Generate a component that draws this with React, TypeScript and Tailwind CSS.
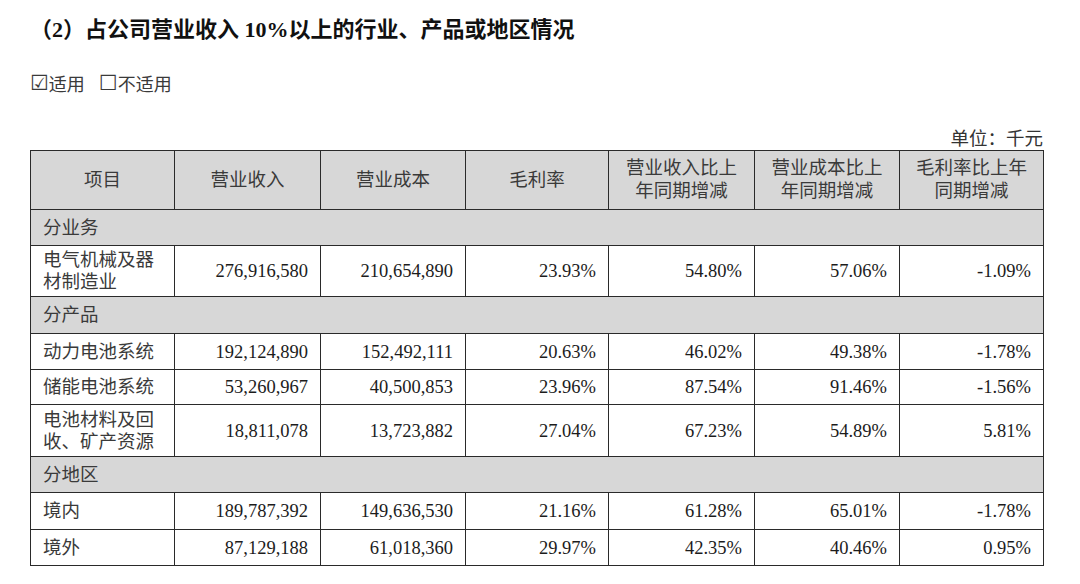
import React from "react";

type Row =
  | { kind: "section"; label: string; h: string }
  | { kind: "data"; label: React.ReactNode; values: string[]; h: string };

const rows: Row[] = [
  { kind: "section", label: "分业务", h: "h-[36px]" },
  {
    kind: "data",
    label: (
      <>
        电气机械及器
        <br />
        材制造业
      </>
    ),
    values: ["276,916,580", "210,654,890", "23.93%", "54.80%", "57.06%", "-1.09%"],
    h: "h-[51px]",
  },
  { kind: "section", label: "分产品", h: "h-[37px]" },
  {
    kind: "data",
    label: "动力电池系统",
    values: ["192,124,890", "152,492,111", "20.63%", "46.02%", "49.38%", "-1.78%"],
    h: "h-[36px]",
  },
  {
    kind: "data",
    label: "储能电池系统",
    values: ["53,260,967", "40,500,853", "23.96%", "87.54%", "91.46%", "-1.56%"],
    h: "h-[35px]",
  },
  {
    kind: "data",
    label: (
      <>
        电池材料及回
        <br />
        收、矿产资源
      </>
    ),
    values: ["18,811,078", "13,723,882", "27.04%", "67.23%", "54.89%", "5.81%"],
    h: "h-[52px]",
  },
  { kind: "section", label: "分地区", h: "h-[36px]" },
  {
    kind: "data",
    label: "境内",
    values: ["189,787,392", "149,636,530", "21.16%", "61.28%", "65.01%", "-1.78%"],
    h: "h-[37px]",
  },
  {
    kind: "data",
    label: "境外",
    values: ["87,129,188", "61,018,360", "29.97%", "42.35%", "40.46%", "0.95%"],
    h: "h-[36px]",
  },
];

const colClasses = [
  "w-[144px]",
  "w-[146px]",
  "w-[145px]",
  "w-[143px]",
  "w-[146px]",
  "w-[145px]",
  "w-[144px]",
];

const headers: React.ReactNode[] = [
  "项目",
  "营业收入",
  "营业成本",
  "毛利率",
  <>
    营业收入比上
    <br />
    年同期增减
  </>,
  <>
    营业成本比上
    <br />
    年同期增减
  </>,
  <>
    毛利率比上年
    <br />
    同期增减
  </>,
];

export default function App() {
  return (
    <div className="w-[1080px] h-[584px] bg-white overflow-hidden pl-[30px] font-['Liberation_Serif','Noto_Sans_CJK_SC',serif]">
      <div className="mt-[15px] h-[30px] leading-[30px] text-[22px] font-bold text-[#111]">
        （2）占公司营业收入 10%以上的行业、产品或地区情况
      </div>
      <div className="mt-[26px] h-[24px] leading-[24px] text-[18px] text-[#3a3a3a] flex items-center font-['Noto_Sans_CJK_SC',sans-serif]">
        <span className="font-['DejaVu_Sans',sans-serif] text-[21px] leading-[24px]">☑</span>
        <span>适用</span>
        <span className="ml-[14px] font-['DejaVu_Sans',sans-serif] text-[21px] leading-[24px]">☐</span>
        <span>不适用</span>
      </div>
      <div className="mt-[33px] w-[1013px] h-[22px] leading-[22px] text-right text-[18.5px] text-[#333]">
        单位：千元
      </div>
      <table className="border-collapse table-fixed w-[1013px] text-[18.5px] text-[#1c1c1c]">
        <colgroup>
          {colClasses.map((c, i) => (
            <col key={i} className={c} />
          ))}
        </colgroup>
        <thead>
          <tr className="h-[59px] bg-[#d7d7d7]">
            {headers.map((h, i) => (
              <th
                key={i}
                className="border border-[#2a2a2a] font-normal text-center leading-[23px] text-[#3a3a3a] px-1"
              >
                {h}
              </th>
            ))}
          </tr>
        </thead>
        <tbody>
          {rows.map((r, i) =>
            r.kind === "section" ? (
              <tr key={i} className={`bg-[#d7d7d7] ${r.h}`}>
                <td
                  colSpan={7}
                  className="border border-[#2a2a2a] px-3 text-left leading-[22px] text-[#3a3a3a]"
                >
                  {r.label}
                </td>
              </tr>
            ) : (
              <tr key={i} className={r.h}>
                <td className="border border-[#2a2a2a] px-3 text-left leading-[22px] text-[#3a3a3a]">
                  {r.label}
                </td>
                {r.values.map((v, j) => (
                  <td
                    key={j}
                    className="border border-[#2a2a2a] pl-2 pr-[12px] text-right leading-[22px]"
                  >
                    {v}
                  </td>
                ))}
              </tr>
            )
          )}
        </tbody>
      </table>
    </div>
  );
}
